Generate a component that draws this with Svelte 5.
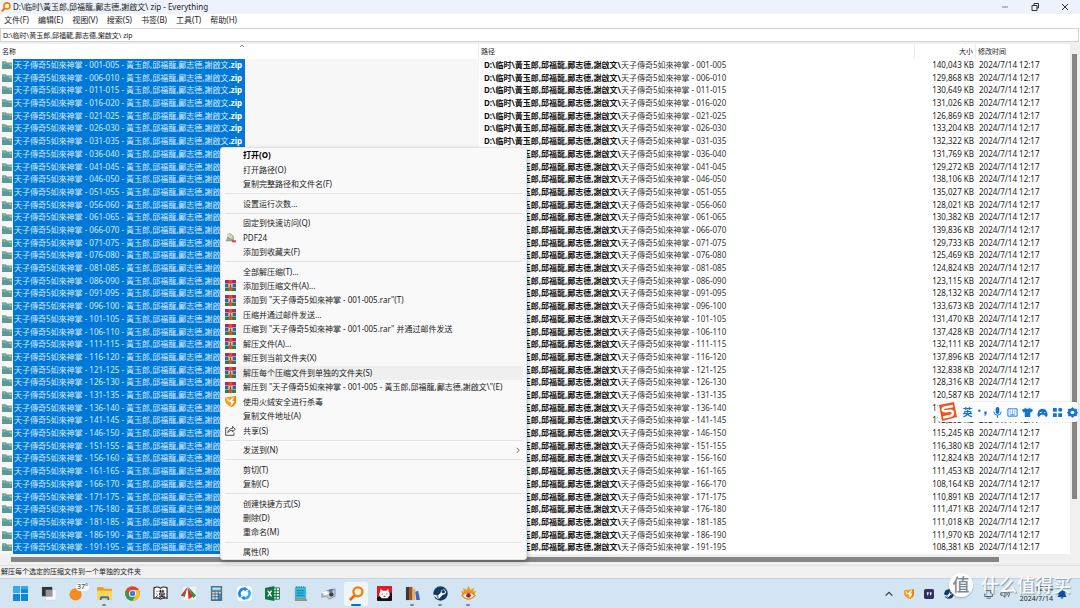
<script>
    const authors = '黃玉郎,邱福龍,鄺志德,謝啟文';
    const title = '天子傳奇5如來神掌';

    const sizes = [
        '140,043', '129,868', '130,649', '131,026', '126,869', '133,204', '132,322', '131,769',
        '129,272', '138,106', '135,027', '128,021', '130,382', '139,836', '129,733', '125,469',
        '124,824', '123,115', '128,132', '133,673', '131,470', '137,428', '132,111', '137,896',
        '132,838', '128,316', '120,587', '114,702', '112,203', '115,245', '116,380', '112,824',
        '111,453', '108,164', '110,891', '111,471', '111,018', '111,970', '108,381'
    ];

    const pad = (n) => String(n).padStart(3, '0');

    const files = sizes.map((size, i) => ({
        range: `${pad(i * 5 + 1)}-${pad(i * 5 + 5)}`,
        size
    }));

    const menuBar = ['文件(F)', '编辑(E)', '视图(V)', '搜索(S)', '书签(B)', '工具(T)', '帮助(H)'];

    const contextMenu = [
        { text: '打开(O)', bold: true },
        { text: '打开路径(O)' },
        { text: '复制完整路径和文件名(F)' },
        null,
        { text: '设置运行次数...' },
        null,
        { text: '固定到快速访问(Q)' },
        { text: 'PDF24', icon: 'pdf' },
        { text: '添加到收藏夹(F)' },
        null,
        { text: '全部解压缩(T)...' },
        { text: '添加到压缩文件(A)...', icon: 'rar' },
        { text: `添加到 "${title} - 001-005.rar"(T)`, icon: 'rar' },
        { text: '压缩并通过邮件发送...', icon: 'rar' },
        { text: `压缩到 "${title} - 001-005.rar" 并通过邮件发送`, icon: 'rar' },
        { text: '解压文件(A)...', icon: 'rar' },
        { text: '解压到当前文件夹(X)', icon: 'rar' },
        { text: '解压每个压缩文件到单独的文件夹(S)', icon: 'rar', active: true },
        { text: `解压到 "${title} - 001-005 - ${authors}\\"(E)`, icon: 'rar' },
        { text: '使用火绒安全进行杀毒', icon: 'shield' },
        { text: '复制文件地址(A)' },
        { text: '共享(S)', icon: 'share' },
        null,
        { text: '发送到(N)', sub: true },
        null,
        { text: '剪切(T)' },
        { text: '复制(C)' },
        null,
        { text: '创建快捷方式(S)' },
        { text: '删除(D)' },
        { text: '重命名(M)' },
        null,
        { text: '属性(R)' }
    ];

    const apps = [
        { name: 'start' }, { name: 'tasks' }, { name: 'weather' },
        { name: 'explorer', running: true }, { name: 'chrome' }, { name: 'comic' },
        { name: 'kite' }, { name: 'calculator' }, { name: 'sync' }, { name: 'excel' },
        { name: 'notepad' }, { name: 'scanner' }, { name: 'everything', active: true },
        { name: 'bear' }, { name: 'books', running: true },
        { name: 'steam', running: true }, { name: 'crown', running: true }
    ];

    let query = `D:\\临时\\${authors}\\ zip`;
</script>

{#snippet icon(name)}
    <svg viewBox="0 0 16 16" aria-hidden="true">
        {#if name === 'start'}
            <path fill="#1583d8" d="M0 0h7.5v7.5H0zM8.5 0H16v7.5H8.5zM0 8.5h7.5V16H0zM8.5 8.5H16V16H8.5z" />
            <path fill="#36a8ec" d="M0 0h7.5v7.5H0zM8.5 0H16v3.5H8.5z" />
        {:else if name === 'tasks'}
            <rect x="5" y="4" width="11" height="11" fill="#f8f9fa" stroke="#c7d0d6" stroke-width=".5" />
            <path fill="#313336" d="M1 1h11v10H1z" />
            <path fill="#94989b" d="M5 4h7v7H5z" />
        {:else if name === 'weather'}
            <circle cx="7" cy="9" r="6.5" fill="#f58b20" />
            <path fill="#ffb833" d="M1 7a6.5 6.5 0 0 0 11 5A6.5 6.5 0 0 1 1 7z" />
        {:else if name === 'explorer'}
            <path fill="#e8a21b" d="M0 2q0-1 1-1h5l2 2h7q1 0 1 1v10H0z" />
            <path fill="#ffd45a" d="M0 5h16v9q0 1-1 1H1q-1 0-1-1z" />
            <path fill="#2374cf" d="M3 15v-2q0-2 2-2h6q2 0 2 2v2h-2v-2H5v2z" />
        {:else if name === 'chrome'}
            <circle cx="8" cy="8" r="7.8" fill="#e34133" />
            <path fill="#2b9f4d" d="M1.2 4.2A7.8 7.8 0 0 0 8 15.8L11.4 10H4.6z" />
            <path fill="#fbc02d" d="M8 15.8A7.8 7.8 0 0 0 14.8 4.2H8l3.5 5.8z" />
            <circle cx="8" cy="8" r="3.8" fill="#fff" />
            <circle cx="8" cy="8" r="2.9" fill="#397fe0" />
        {:else if name === 'comic'}
            <path fill="#fff" stroke="#202020" stroke-width="1.2" d="M1 2q4-2 7 .5 3-2.500 7-.5v11q-4-1-7 1-3-2-7-1z" />
            <path fill="none" stroke="#202020" stroke-width="1" d="M3.500 5l1 1M3.500 8l1 1M3 12l2-2M6 5.500h6M8 4v3M10.500 4v3M7 7.500h5v2H7zM6.500 11H13M9.500 8v3l-3 2M10 11l2 2" />
        {:else if name === 'kite'}
            <path fill="#eef2f4" d="M2 1h14v14H2z" />
            <path fill="#2c9a48" d="M7 1L0 10l5 2z" />
            <path fill="#fff" d="M7 1L4 12l4 2z" />
            <path fill="#df2e25" d="M7 1l1 13 5-3z" />
            <path fill="#279443" d="M8 1l8 9-3 3z" />
            <path fill="#df2e25" d="M7 1L0 10l3 1z" />
        {:else if name === 'calculator'}
            <path fill="#506f80" d="M2 0h12v16H2z" />
            <path fill="#a2dff2" d="M3.5 1.5h9v3h-9z" />
            <path fill="#d7e2e8" d="M3.5 6H6v2H3.5zM7 6h2.2v2H7zM10.5 6h2v2h-2zM3.5 9H6v2H3.5zM7 9h2.2v2H7zM3.5 12H6v2H3.5zM7 12h2.2v2H7z" />
            <path fill="#2d8dcf" d="M10.5 9h2v5h-2z" />
        {:else if name === 'sync'}
            <rect width="16" height="16" rx="4" fill="#fbfdff" />
            <path fill="none" stroke="#168bea" stroke-width="2.8" d="M4 11.500a5 5 0 0 1 4.500-8.400" />
            <path fill="none" stroke="#27b1ee" stroke-width="2.8" d="M12 4.500a5 5 0 0 1-4.500 8.400" />
            <path fill="#168bea" d="M8 .8l4 2.700-4 2zM8 15.200l-4-2.700 4-2z" />
        {:else if name === 'excel'}
            <path fill="#fff" stroke="#1d7a48" d="M7 2h8.5v12H7z" />
            <path stroke="#1d7a48" stroke-width="1.2" d="M8 5h7M8 8h7M8 11h7M12 2v12" />
            <path fill="#147543" d="M0 2l10-2v16L0 14z" />
            <path stroke="#fff" stroke-width="1.4" d="M3 5l4 6M7 5l-4 6" />
        {:else if name === 'notepad'}
            <path fill="#35b9df" d="M2 1h12v13H2z" />
            <path stroke="#176b93" stroke-width=".8" d="M4 5h8M4 7.5h8M4 10h8M4 0v2M6.5 0v2M9 0v2M11.5 0v2" />
            <path fill="#c6813c" d="M2 14h13v2H2z" />
        {:else if name === 'scanner'}
            <path fill="#c0c5ca" stroke="#65717b" stroke-width=".6" d="M1 8l5-3 9-2v8l-6 3-4-3-4 1z" />
            <path fill="#f5f6f7" d="M1 7l5-2 3 3-5 2z" />
            <path fill="#5075a8" d="M8 4l5-1-1 3-3 1z" />
            <circle cx="11" cy="9" r="2.3" fill="#343e48" />
        {:else if name === 'everything'}
            <circle cx="9.5" cy="6.2" r="4.8" fill="#fff2df" stroke="#ef810c" stroke-width="2.5" />
            <path stroke="#e66e08" stroke-width="3" d="M6 10l-5 5" />
        {:else if name === 'bear'}
            <rect width="16" height="16" rx="1" fill="#161214" />
            <path fill="#d81e29" d="M0 0h16v7L0 12z" />
            <path fill="#fff" d="M4 3l2 2h4l2-2 .5 3 1 2v2l-2.500 3H5l-2.500-3V8l1-2z" />
            <path stroke="#2b1717" d="M5 8.500h1M10 8.500h1M7 11h2" />
        {:else if name === 'books'}
            <path fill="#4a332b" d="M1 1h4v14H1z" />
            <path fill="#9b542f" d="M5 1h3v14H5z" />
            <path fill="#e2b461" d="M8 3h3v12H8z" />
            <path fill="#3f66c6" d="M11 6l3-1 2 10h-4z" />
        {:else if name === 'steam'}
            <circle cx="8" cy="8" r="7.7" fill="#153a68" />
            <path fill="#fff" d="M.5 9l4.500 1.500L8 7.500 9 4.500l3-1 2 2.500-1 2.500-3 1-3 3.500-2.500.5-2-2-2-.5z" />
            <circle cx="11" cy="6" r="1.8" fill="#153a68" />
            <circle cx="5" cy="11.500" r="1.2" fill="#5f91c0" />
        {:else if name === 'crown'}
            <path fill="#f39b21" d="M0 5l3 1-1-4 4 2 2-4 2 4 4-2-1 4 3-1-2 5H2z" />
            <path fill="#fff" d="M2 10q6-6 12 0-6 7-12 0z" />
            <path fill="none" stroke="#e08a22" stroke-width="1.3" d="M1 10q7-7 14 0-7 8-14 0z" />
            <circle cx="8" cy="10" r="2.5" fill="#97291f" />
        {:else if name === 'zip'}
            <path fill="#6fa58c" d="M0 2h6l2 2h8v10H0z" />
            <path fill="#4f97b8" d="M0 7h13v4H0z" />
            <path fill="#a9c48c" d="M3 4h2v2H3zM11 6h4v2h-4z" />
            <path fill="#5a8c78" d="M0 12h16v2H0z" />
        {:else if name === 'rar'}
            <path fill="#a72963" d="M0 0h16v5H0z" />
            <path fill="#2e62bd" d="M0 5.5h16v5H0z" />
            <path fill="#218445" d="M0 11h16v5H0z" />
            <path fill="#e84c24" d="M5.5 0h5v16h-5z" />
            <path fill="#f6db9a" d="M5 5.5h6v5H5z" />
            <path fill="#6e4937" d="M7 6.5h2v4H7z" />
        {:else if name === 'pdf'}
            <path fill="#a8aaa7" d="M1 13l3-7 4-3 4 4 1 6z" />
            <path fill="#dfd3b8" d="M4 6l4-3 4 5-4 2z" />
            <path fill="none" stroke="#8a8984" d="M3 4l4-2 5 4v5M1 13h12M3 8l6 3" />
            <path fill="#e1453b" d="M10 12h6v3h-6z" />
        {:else if name === 'shield'}
            <path fill="#f7a01e" d="M0 2l7-1 9-1v8q-1 6-7 8-8-3-9-9z" />
            <path fill="#fff" d="M2 3q3 1 4 4l7-6q-1 4-3 6 4 0 3 2-1 3-5 5 2-4 0-5-5-1-6-6z" />
            <path fill="#f58015" d="M13 1l3-1v8q-1 6-7 8 6-7 4-15z" />
        {:else if name === 'share'}
            <path fill="none" stroke="#3a3a3a" stroke-width="1.3" d="M5 4H1v11h12v-4M4 11q1-6 7-6V2l4 4-4 4V8q-4-1-7 3z" />
        {/if}
    </svg>
{/snippet}

<div class="desktop">
    <main>
        <header class="title-bar">
            <span class="logo">{@render icon('everything')}</span>
            <h1>{query} - Everything</h1>
            <div class="window-buttons">
                <button aria-label="最小化"><svg viewBox="0 0 10 10"><path d="M2 5h6" opacity=".6" /></svg></button>
                <button aria-label="还原"><svg viewBox="0 0 10 10"><path d="M2 3.5h5v5H2zM4 3V1.5h4.5V6H7" /></svg></button>
                <button aria-label="关闭"><svg viewBox="0 0 10 10"><path d="M2 2l6 6M8 2L2 8" /></svg></button>
            </div>
        </header>

        <nav class="menu-bar">
            {#each menuBar as item}
                <button>{item}</button>
            {/each}
        </nav>

        <div class="search">
            <input type="text" aria-label="搜索" bind:value={query} />
        </div>

        <div class="results">
            <table>
                <thead>
                    <tr>
                        <th>名称 <svg class="sort" viewBox="0 0 6 4"><path d="M1 3l2-2 2 2" /></svg></th>
                        <th>路径</th>
                        <th class="size">大小</th>
                        <th>修改时间</th>
                    </tr>
                </thead>
                <tbody>
                    {#each files as { range, size }}
                        <tr>
                            <td class="name">
                                <span class="file-icon">{@render icon('zip')}</span>
                                <span class="selected">{title} - {range} - {authors}<b>.zip</b></span>
                            </td>
                            <td class="path"><b>D:\临时\{authors}\</b>{title} - {range}</td>
                            <td class="size">{size} KB</td>
                            <td>2024/7/14 12:17</td>
                        </tr>
                    {/each}
                </tbody>
            </table>
            <div class="scroll-y"><div class="thumb"></div></div>
        </div>
        <div class="scroll-x"><div class="thumb"></div></div>
        <footer class="status">解压每个选定的压缩文件到一个单独的文件夹</footer>
    </main>

    <div class="context-menu" role="menu">
        {#each contextMenu as item}
            {#if item}
                <button role="menuitem" class:active={item.active} class:bold={item.bold}>
                    <span class="menu-icon">{#if item.icon}{@render icon(item.icon)}{/if}</span>
                    <span>{item.text}</span>
                    {#if item.sub}
                        <svg class="arrow" viewBox="0 0 6 8"><path d="M2 1l3 3-3 3" /></svg>
                    {/if}
                </button>
            {:else}
                <hr />
            {/if}
        {/each}
    </div>

    <div class="ime">
        <svg class="sogou" viewBox="0 0 20 20">
            <path fill="#f4511e" d="M1 3l15-3 3 15-15 4z" />
            <path fill="none" stroke="#fff" stroke-width="2.6" d="M15 4L7 5.5Q4 6 5 8.5q.5 1 3 .7l4-.5q3-.2 3 2.3t-3 3L5 15.5" />
        </svg>
        <button class="lang">英</button>
        <button aria-label="标点"><svg viewBox="0 0 12 12"><circle cx="2.5" cy="4" r="1.3" /><path d="M8 5h2.5v2.5L8.5 10l-.5-.5L9 8H8z" /></svg></button>
        <button aria-label="语音"><svg viewBox="0 0 12 12"><rect x="4" y="0" width="4" height="7.5" rx="2" /><path class="line" d="M2 5q0 4 4 4t4-4M6 9v3" /></svg></button>
        <button aria-label="键盘"><svg viewBox="0 0 12 12"><path class="line" d="M1 2h10v8H1zM3 4.5h1M5.5 4.5h1M8 4.5h1M3 6.5h1M5.5 6.5h1M8 6.5h1M3.500 8.500h5" /></svg></button>
        <button aria-label="皮肤"><svg viewBox="0 0 12 12"><path d="M4 1q2 2 4 0l4 2-1.500 3L9 5.500V11H3V5.500L1.500 6 0 3z" /></svg></button>
        <button aria-label="游戏"><svg viewBox="0 0 12 12"><path d="M1 6q1-4 5-4t5 4q1.500 4-1 5L7.500 8.500h-3L2 11Q-.5 10 1 6z" /><path stroke="#fff" d="M3 6h2M8 6h1" /></svg></button>
        <button aria-label="工具箱"><svg viewBox="0 0 12 12"><path d="M1 1h4.2v4.2H1zM1 6.8h4.2V11H1zM6.8 6.8H11V11H6.8z" /><circle cx="9" cy="3" r="2.2" /></svg></button>
        <button aria-label="设置"><svg viewBox="0 0 12 12"><path d="M6 0l1.800 2 2.800-.2.200 2.700L12 6l-1.200 1.500-.2 2.700-2.800-.2L6 12l-1.800-2-2.800.2-.2-2.700L0 6l1.200-1.500.2-2.700 2.800.2z" /><circle cx="6" cy="6" r="2" fill="#fff" /></svg></button>
    </div>

    <div class="taskbar">
        <div class="apps">
            {#each apps as app}
                <button aria-label={app.name} class:running={app.running} class:current={app.active}>
                    {@render icon(app.name)}
                    {#if app.name === 'weather'}<span class="badge">37°</span>{/if}
                </button>
            {/each}
        </div>
        <div class="tray">
            <svg viewBox="0 0 12 12"><path fill="none" stroke="#333" stroke-width="1.3" d="M2 8l4-4 4 4" /></svg>
            {@render icon('shield')}
            <svg viewBox="0 0 12 12"><rect width="12" height="12" rx="2" fill="#343064" /><path fill="#fff" d="M3.500 4h2v2l-1.500 2zM7 4h2v2L7.500 8z" /></svg>
            {@render icon('steam')}
            <span class="spacer"></span>
            <svg viewBox="0 0 12 12"><path fill="none" stroke="#444" d="M7 2H1v7h9V6M3 11h5M8 1v4h3V1" /></svg>
            <svg class="volume" viewBox="0 0 12 12"><path fill="none" stroke="#444" d="M1 4.500h2L6 2v8L3 7.500H1zM8 4q1.500 2 0 4M10 2.500q2.500 3.500 0 7" /></svg>
            <time><span>12:34</span><span>2024/7/14</span></time>
            <svg viewBox="0 0 12 12"><path fill="#0c4fa5" d="M0 9.500q2-1 2-4.500 0-4 4-4t4 4q0 3.500 2 4.500zM4.500 10h3v1.500h-3z" /></svg>
        </div>
    </div>

    <div class="watermark"><span class="seal">值</span><span>什么值得买</span></div>
</div>

<style>
    :global(body) {
        margin: 0;
    }
    .desktop {
        position: relative;
        display: flex;
        flex-direction: column;
        height: 100vh;
        overflow: hidden;
        font-family: "Noto Sans", "Noto Sans CJK SC", sans-serif;
        font-size: 8px;
        line-height: 12px;
        color: #222;
        background: #fff;
    }
    svg {
        display: block;
    }
    button {
        padding: 0;
        border: none;
        background: none;
        font: inherit;
        color: inherit;
    }
    main {
        flex: 1;
        min-height: 0;
        display: flex;
        flex-direction: column;
    }

    .title-bar {
        display: flex;
        align-items: center;
        height: 14px;
        background: #eef3fb;
    }
    .logo {
        width: 10px;
        margin: 0 2px 0 1px;
    }
    h1 {
        flex: 1;
        margin: 0;
        font-size: 8px;
        font-weight: normal;
    }
    .window-buttons {
        display: flex;
    }
    .window-buttons button {
        width: 30px;
        display: flex;
        justify-content: center;
    }
    .window-buttons svg {
        width: 10px;
        fill: none;
        stroke: #333;
    }

    .menu-bar {
        display: flex;
        gap: 9px;
        height: 14px;
        padding-left: 4px;
    }
    .menu-bar button {
        line-height: 12px;
        padding-bottom: 2px;
    }
    .search {
        display: flex;
        padding-right: 1px;
        border-bottom: 2px solid #f0f0f0;
    }
    .search input {
        flex: 1;
        height: 14px;
        box-sizing: border-box;
        padding: 0 2px;
        border: 1px solid #d2d2d2;
        font: inherit;
        font-size: 7px;
        color: inherit;
    }

    .results {
        flex: 1;
        min-height: 0;
        display: flex;
    }
    table {
        flex: 1;
        display: flex;
        flex-direction: column;
    }
    tbody {
        flex: 1;
        min-height: 0;
        display: grid;
        grid-auto-rows: 1fr;
    }
    tr {
        display: grid;
        grid-template-columns: 479fr 436fr 61fr 94fr;
        min-height: 0;
    }
    th {
        position: relative;
        padding: 1px 2px;
        border-right: 1px solid #ececec;
        font-size: 7px;
        font-weight: normal;
        line-height: 13px;
        text-align: left;
    }
    th:last-child {
        border: none;
    }
    .sort {
        position: absolute;
        top: 0;
        left: 50%;
        width: 6px;
        fill: none;
        stroke: #888;
        stroke-width: 1px;
    }
    td {
        padding: 0 3px;
        white-space: nowrap;
        min-height: 0;
    }
    td.name {
        display: flex;
        padding: 0 0 0 2px;
        background: #f7f7f7;
    }
    td.path {
        padding-left: 5px;
        color: #333;
    }
    td.path b {
        color: #111;
    }
    .size {
        text-align: right;
    }
    td.size {
        padding-right: 2px;
    }
    .file-icon {
        width: 10px;
        padding: 1px 1px 0 0;
    }
    .selected {
        padding: 0 3px 0 1px;
        background: #0078d7;
        color: #d8ebfb;
    }
    .selected b {
        color: #fff;
    }

    .scroll-y {
        width: 10px;
        padding: 10px 3px 0 2px;
        box-sizing: border-box;
        background: #f0f0f0;
    }
    .scroll-y .thumb {
        height: 89%;
        background: #858585;
    }
    .scroll-x {
        padding: 3px 81px 3px 11px;
        background: #f0f0f0;
    }
    .scroll-x .thumb {
        height: 5px;
        background: #858585;
    }
    .status {
        height: 12px;
        padding-left: 1px;
        border-top: 1px solid #dedede;
        background: #f0f0f0;
        font-size: 7px;
    }

    .context-menu {
        position: absolute;
        top: 147px;
        bottom: 48px;
        left: 220px;
        width: 307px;
        box-sizing: border-box;
        display: flex;
        flex-direction: column;
        border: 1px solid #e3e3e3;
        border-radius: 3px;
        background: #f9f9f9;
        box-shadow: 1px 2px 4px rgba(0, 0, 0, 0.3);
    }
    .context-menu button {
        flex: 1;
        min-height: 0;
        display: flex;
        align-items: center;
        margin: 0 3px;
        padding: 0 3px 0 1px;
        text-align: left;
        white-space: nowrap;
    }
    .context-menu .active {
        background: #efefef;
    }
    .context-menu .bold {
        font-weight: bold;
        color: #000;
    }
    .context-menu hr {
        width: 297px;
        margin: 2px auto;
        border: none;
        border-top: 1px solid #e2e2e2;
    }
    .menu-icon {
        width: 11px;
        margin-right: 7px;
    }
    .arrow {
        width: 5px;
        margin-left: auto;
        fill: none;
        stroke: #444;
    }

    .ime {
        position: absolute;
        right: 2px;
        top: 402px;
        display: flex;
        align-items: center;
        gap: 4px;
        height: 20px;
        background: #fbfdff;
        border-radius: 3px;
        box-shadow: 0 0 2px rgba(0, 0, 0, 0.2);
        color: #1373d1;
    }
    .ime .sogou {
        width: 20px;
    }
    .ime button {
        width: 11px;
    }
    .ime .lang {
        font-size: 10px;
        font-weight: bold;
    }
    .ime button svg {
        width: 11px;
        fill: #1373d1;
    }
    .ime button .line {
        fill: none;
        stroke: #1373d1;
    }

    .taskbar {
        display: flex;
        justify-content: space-between;
        align-items: center;
        height: 30px;
        padding: 0 13px 0 8px;
        box-sizing: border-box;
        border-top: 1px solid #c5d5e2;
        background: #d3e5f3;
    }
    .apps {
        display: flex;
        gap: 4px;
    }
    .apps button {
        position: relative;
        width: 24px;
        height: 24px;
        display: grid;
        place-items: center;
        border-radius: 2px;
    }
    .apps button > svg {
        width: 15px;
    }
    .apps .current {
        background: #edf4fa;
    }
    .apps .running::after,
    .apps .current::after {
        content: "";
        position: absolute;
        bottom: 0;
        left: 10px;
        width: 4px;
        height: 2px;
        border-radius: 1px;
        background: #7c8791;
    }
    .apps .current::after {
        left: 7px;
        width: 10px;
        background: #0873cf;
    }
    .badge {
        position: absolute;
        top: 1px;
        right: -1px;
        padding: 0 1px;
        border-radius: 4px;
        background: #f8fbfd;
        font-size: 7px;
        line-height: 8px;
    }
    .tray {
        display: flex;
        align-items: center;
        gap: 10px;
    }
    .tray svg {
        width: 10px;
        flex-shrink: 0;
    }
    .tray .spacer {
        width: 10px;
    }
    .tray .volume {
        margin-left: -4px;
    }
    .tray time {
        display: flex;
        flex-direction: column;
        align-items: flex-end;
        margin-right: -6px;
        font-size: 7px;
        line-height: 10px;
    }

    .watermark {
        position: absolute;
        right: 9px;
        bottom: 11px;
        display: flex;
        align-items: center;
        gap: 8px;
        font-size: 18px;
        font-weight: 500;
        line-height: 24px;
        color: rgba(255, 255, 255, 0.95);
        text-shadow: 1px 1px 1px rgba(60, 80, 100, 0.5);
        pointer-events: none;
    }
    .seal {
        width: 24px;
        height: 24px;
        border-radius: 50%;
        background: rgba(255, 255, 255, 0.95);
        box-shadow: 0 1px 2px rgba(60, 80, 100, 0.4);
        color: #7d8994;
        text-align: center;
        text-shadow: none;
        font-size: 17px;
    }
</style>
